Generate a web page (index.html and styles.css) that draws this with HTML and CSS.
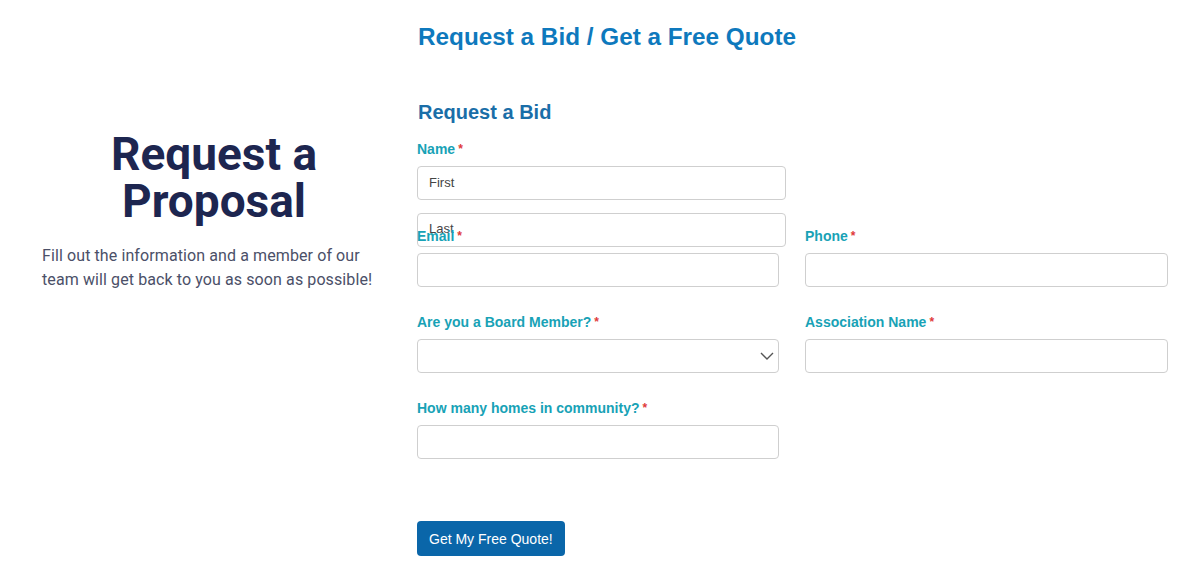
FILE: index.html
```html
<!DOCTYPE html>
<html>
<head>
<meta charset="utf-8">
<link rel="stylesheet" href="styles.css">
</head>
<body>
<div class="page">
  <div class="intro">
    <h2 class="intro-title">Request a Proposal</h2>
    <p class="intro-text">Fill out the information and a member of our team will get back to you as soon as possible!</p>
  </div>
  <div class="form-col">
    <h1 class="form-title">Request a Bid / Get a Free Quote</h1>
    <h3 class="form-sub">Request a Bid</h3>
    <div class="name-block">
      <div class="label">Name<span class="req">*</span></div>
      <div class="input name-input">First</div>
      <div class="input name-input last">Last</div>
    </div>
    <div class="grid">
      <div class="field">
        <div class="label">Email<span class="req">*</span></div>
        <div class="input"></div>
      </div>
      <div class="field">
        <div class="label">Phone<span class="req">*</span></div>
        <div class="input"></div>
      </div>
      <div class="field">
        <div class="label">Are you a Board Member?<span class="req">*</span></div>
        <div class="input select">
          <svg class="chev" width="14" height="8" viewBox="0 0 14 8"><path d="M1 1 L7 7 L13 1" fill="none" stroke="#555" stroke-width="1.4"/></svg>
        </div>
      </div>
      <div class="field">
        <div class="label">Association Name<span class="req">*</span></div>
        <div class="input"></div>
      </div>
      <div class="field">
        <div class="label">How many homes in community?<span class="req">*</span></div>
        <div class="input"></div>
      </div>
    </div>
    <button class="submit">Get My Free Quote!</button>
  </div>
</div>
</body>
</html>
```
FILE: styles.css
```css
* { box-sizing: border-box; }
body {
  margin: 0;
  background: #fff;
  font-family: "Liberation Sans", Arial, sans-serif;
}
.page {
  display: flex;
  gap: 31px;
  padding-left: 42px;
}
.intro {
  width: 344px;
  padding-top: 131px;
}
.intro-title {
  margin: 0;
  font-family: Roboto, sans-serif;
  font-weight: 700;
  font-size: 46px;
  line-height: 47px;
  color: #1d2650;
  text-align: center;
}
.intro-text {
  margin: 19px 0 0;
  font-family: Roboto, sans-serif;
  font-size: 16px;
  line-height: 24px;
  letter-spacing: 0.1px;
  color: #4b5068;
}
.form-col {
  width: 752px;
  padding-top: 23px;
}
.form-title {
  margin: 0 0 0 1px;
  font-size: 24.3px;
  line-height: 28px;
  font-weight: 700;
  color: #0e79bd;
}
.form-sub {
  margin: 49px 0 0 1px;
  font-size: 20px;
  line-height: 24px;
  font-weight: 700;
  color: #1a6ea8;
}
.name-block {
  margin-top: 16px;
  height: 61px;
  margin-bottom: 26px;
}
.label {
  font-size: 14px;
  line-height: 17px;
  font-weight: 700;
  color: #18a2b6;
  padding-top: 1px;
  margin-bottom: 8px;
}
.req {
  color: #e03a3a;
  font-size: 12px;
  margin-left: 3px;
  vertical-align: top;
}
.input {
  height: 34px;
  border: 1px solid #cfcfcf;
  border-radius: 4px;
  background: #fff;
  font-size: 13px;
  line-height: 32px;
  color: #444;
  padding-left: 11px;
}
.name-input { width: 369px; }
.name-input.last {
  margin-top: 13px;
  line-height: 30px;
}
.grid {
  display: grid;
  grid-template-columns: 362px 363px;
  column-gap: 26px;
  row-gap: 26px;
}
.select {
  display: flex;
  align-items: center;
  justify-content: flex-end;
  padding-right: 4px;
}
.submit {
  margin-top: 62px;
  height: 35px;
  padding: 0 12px;
  border: none;
  border-radius: 4px;
  background: #0a66a9;
  color: #fff;
  font-family: "Liberation Sans", Arial, sans-serif;
  font-size: 14px;
}
```
